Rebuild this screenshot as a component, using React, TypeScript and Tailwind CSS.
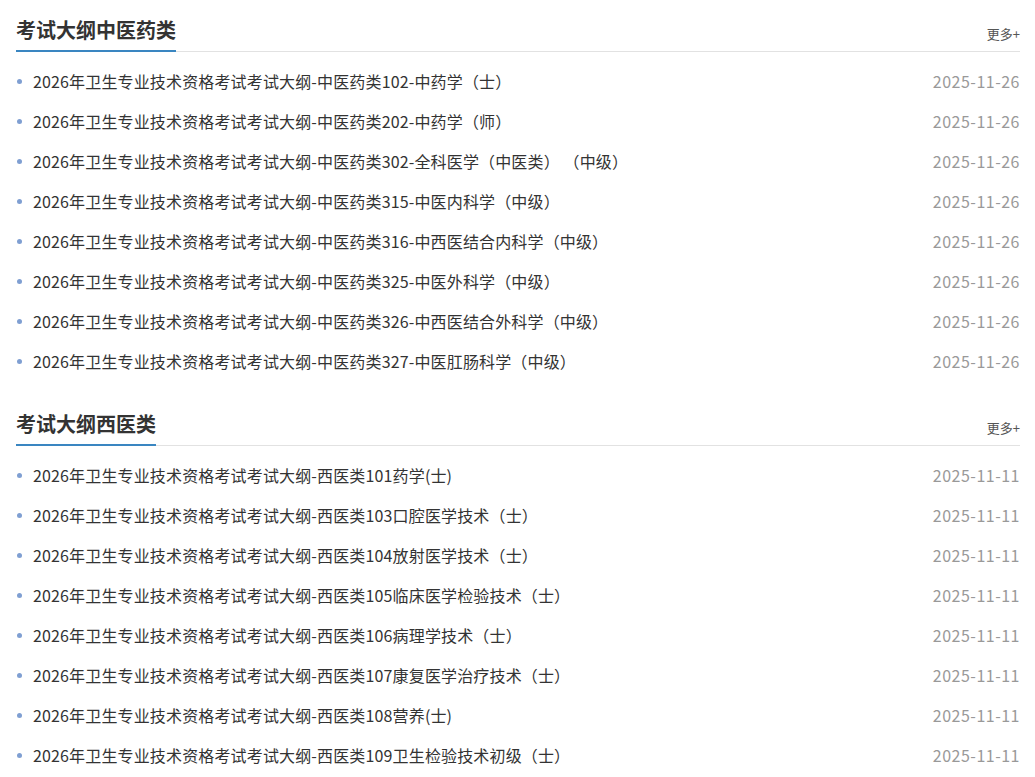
const sections = [
  {
    title: '考试大纲中医药类',
    date: '2025-11-26',
    items: [
      '2026年卫生专业技术资格考试考试大纲-中医药类102-中药学（士）',
      '2026年卫生专业技术资格考试考试大纲-中医药类202-中药学（师）',
      '2026年卫生专业技术资格考试考试大纲-中医药类302-全科医学（中医类） （中级）',
      '2026年卫生专业技术资格考试考试大纲-中医药类315-中医内科学（中级）',
      '2026年卫生专业技术资格考试考试大纲-中医药类316-中西医结合内科学（中级）',
      '2026年卫生专业技术资格考试考试大纲-中医药类325-中医外科学（中级）',
      '2026年卫生专业技术资格考试考试大纲-中医药类326-中西医结合外科学（中级）',
      '2026年卫生专业技术资格考试考试大纲-中医药类327-中医肛肠科学（中级）',
    ],
  },
  {
    title: '考试大纲西医类',
    date: '2025-11-11',
    items: [
      '2026年卫生专业技术资格考试考试大纲-西医类101药学(士)',
      '2026年卫生专业技术资格考试考试大纲-西医类103口腔医学技术（士）',
      '2026年卫生专业技术资格考试考试大纲-西医类104放射医学技术（士）',
      '2026年卫生专业技术资格考试考试大纲-西医类105临床医学检验技术（士）',
      '2026年卫生专业技术资格考试考试大纲-西医类106病理学技术（士）',
      '2026年卫生专业技术资格考试考试大纲-西医类107康复医学治疗技术（士）',
      '2026年卫生专业技术资格考试考试大纲-西医类108营养(士)',
      '2026年卫生专业技术资格考试考试大纲-西医类109卫生检验技术初级（士）',
    ],
  },
];

export default function App() {
  return (
    <div
      className="h-[777px] overflow-hidden bg-white pl-4 pr-[15px]"
      style={{ fontFamily: '"Microsoft YaHei", "Noto Sans CJK SC", "Noto Sans", sans-serif' }}
    >
      {sections.map((s) => (
        <div key={s.title} className="mb-3">
          <div className="flex items-end justify-between border-b border-[#e2e2e2]">
            <h2 className="-mb-px border-b-2 border-[#3a86c1] pb-[6px] pt-4 text-[20px] font-bold leading-7 text-[#333]">
              {s.title}
            </h2>
            <a className="mb-[7px] text-[13px] leading-5 text-[#555]">更多+</a>
          </div>
          <ul className="pt-[9px] pb-px">
            {s.items.map((t) => (
              <li key={t} className="flex h-10 items-center justify-between text-[16px]">
                <div className="flex items-center">
                  <span className="ml-px mr-[11px] mt-px h-[5px] w-[5px] rounded-full bg-[#7f9fd2]" />
                  <span className="tracking-[0.15px] text-[#333]">{t}</span>
                </div>
                <span className="tracking-[0.5px] text-[#999]">{s.date}</span>
              </li>
            ))}
          </ul>
        </div>
      ))}
    </div>
  );
}
